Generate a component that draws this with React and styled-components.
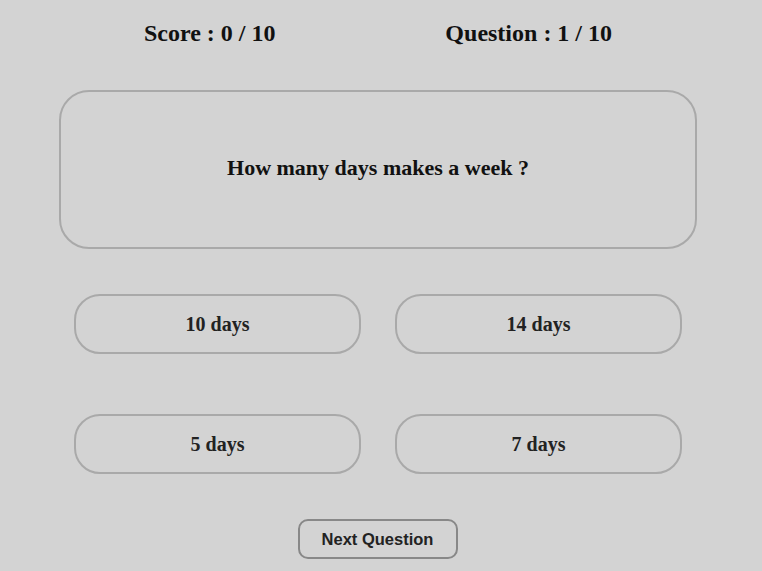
import React from "react";
import styled, { createGlobalStyle } from "styled-components";

const Global = createGlobalStyle`
  html, body { margin: 0; padding: 0; background: #d3d3d3; }
  body { font-family: "Liberation Serif", "Times New Roman", serif; }
`;

const Page = styled.div`
  width: 638px;
  margin-left: 59px;
  display: flex;
  flex-direction: column;
  align-items: stretch;
`;

const Header = styled.div`
  display: flex;
  justify-content: space-around;
  height: 90px;
  padding-top: 19px;
  box-sizing: border-box;
  font-size: 24px;
  font-weight: bold;
  color: #111;
  line-height: 28px;
`;

const QuestionBox = styled.div`
  height: 159px;
  box-sizing: border-box;
  border: 2px solid #a9a9a9;
  border-radius: 30px;
  display: flex;
  align-items: center;
  justify-content: center;
  padding-bottom: 3px;
  font-size: 22px;
  font-weight: bold;
  color: #111;
`;

const Options = styled.div`
  display: grid;
  grid-template-columns: 287px 287px;
  column-gap: 34px;
  row-gap: 60px;
  margin: 45px 0 0 15px;
`;

const Option = styled.button`
  height: 60px;
  box-sizing: border-box;
  border: 2px solid #a9a9a9;
  border-radius: 26px;
  background: transparent;
  font-family: "Liberation Serif", "Times New Roman", serif;
  font-size: 20px;
  font-weight: bold;
  color: #222;
  cursor: pointer;
  padding: 0;
`;

const Footer = styled.div`
  display: flex;
  justify-content: center;
  margin-top: 45px;
  padding-right: 1px;
`;

const NextButton = styled.button`
  width: 160px;
  height: 40px;
  box-sizing: border-box;
  border: 2px solid #888;
  border-radius: 10px;
  background: transparent;
  font-family: "Liberation Sans", Arial, sans-serif;
  font-size: 16.5px;
  font-weight: bold;
  color: #222;
  padding: 0;
  cursor: pointer;
`;

const options = ["10 days", "14 days", "5 days", "7 days"];

export default function App() {
  return (
    <>
      <Global />
      <Page>
        <Header>
          <span>Score : 0 / 10</span>
          <span>Question : 1 / 10</span>
        </Header>
        <QuestionBox>How many days makes a week ?</QuestionBox>
        <Options>
          {options.map((o) => (
            <Option key={o}>{o}</Option>
          ))}
        </Options>
        <Footer>
          <NextButton>Next Question</NextButton>
        </Footer>
      </Page>
    </>
  );
}
